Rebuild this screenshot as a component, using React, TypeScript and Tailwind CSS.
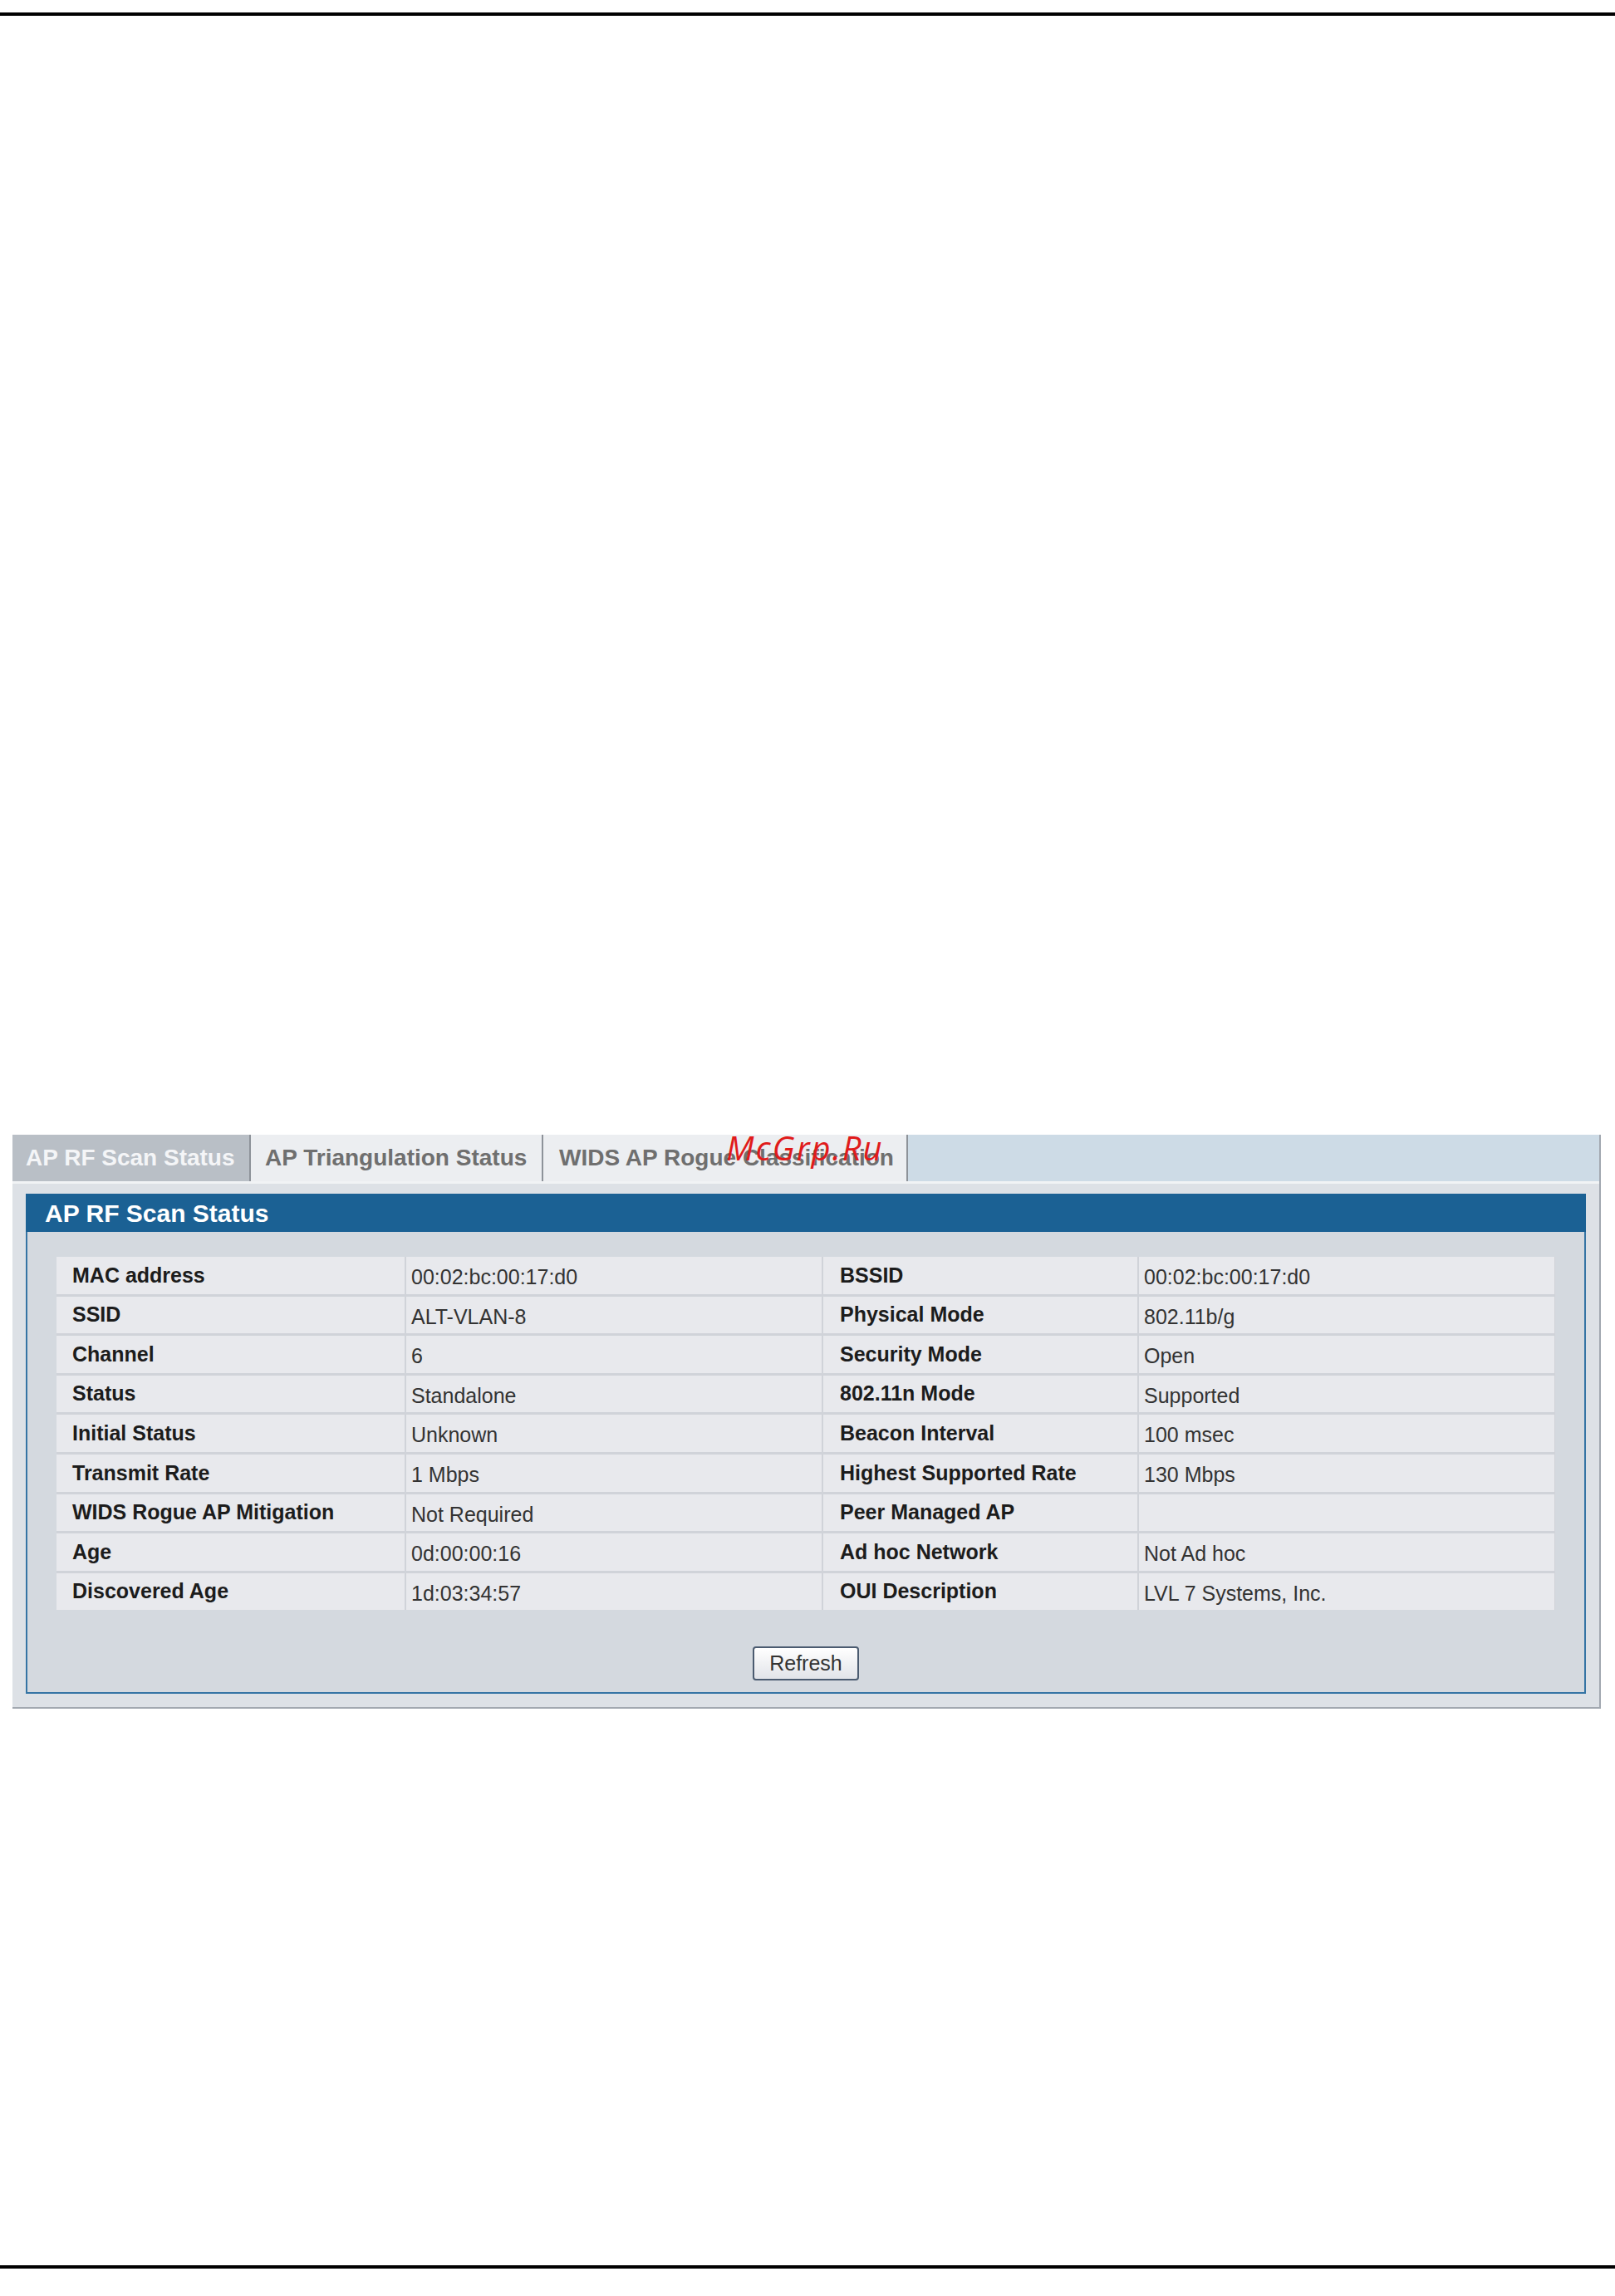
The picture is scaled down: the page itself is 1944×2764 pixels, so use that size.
import React from 'react';

const rows: [string, string, string, string][] = [
  ['MAC address', '00:02:bc:00:17:d0', 'BSSID', '00:02:bc:00:17:d0'],
  ['SSID', 'ALT-VLAN-8', 'Physical Mode', '802.11b/g'],
  ['Channel', '6', 'Security Mode', 'Open'],
  ['Status', 'Standalone', '802.11n Mode', 'Supported'],
  ['Initial Status', 'Unknown', 'Beacon Interval', '100 msec'],
  ['Transmit Rate', '1 Mbps', 'Highest Supported Rate', '130 Mbps'],
  ['WIDS Rogue AP Mitigation', 'Not Required', 'Peer Managed AP', ''],
  ['Age', '0d:00:00:16', 'Ad hoc Network', 'Not Ad hoc'],
  ['Discovered Age', '1d:03:34:57', 'OUI Description', 'LVL 7 Systems, Inc.'],
];

function Label({ text, pl }: { text: string; pl: string }) {
  return (
    <div className={`flex items-center whitespace-nowrap bg-[#e8e9ed] text-[25px] font-bold text-[#1c1c1c] ${pl}`}>
      {text}
    </div>
  );
}

function Value({ text }: { text: string }) {
  return (
    <div className="flex items-center whitespace-nowrap bg-[#e8e9ed] pl-[6px] pt-[5px] text-[25px] text-[#333333]">
      {text}
    </div>
  );
}

export default function App() {
  return (
    <div className="relative h-[2764px] w-[1944px] overflow-hidden bg-white font-['Liberation_Sans',Arial,sans-serif]">
      {/* top rule */}
      <div className="mt-[15px] h-[4px] bg-black" />

      {/* panel */}
      <div className="ml-[15px] mt-[1347px] w-[1912px] border-r-2 border-b-2 border-[#a2a8b0] bg-[#dde1e6]">
        {/* tabs */}
        <div className="flex h-[56px] bg-[#cddbe6] leading-none whitespace-nowrap">
          <div className="flex w-[285px] items-center pl-[16px] bg-[#b9bfc6] text-[28px] font-bold text-[#f4f5f7]">
            AP RF Scan Status
          </div>
          <div className="flex w-[352px] items-center border-l-2 border-[#8d9299] bg-[#eceef1] pl-[17px] text-[28px] font-bold text-[#6f6f6f]">
            AP Triangulation Status
          </div>
          <div className="flex w-[441px] items-center border-x-2 border-[#8d9299] bg-[#eceef1] pl-[19px] text-[28px] font-bold text-[#6f6f6f]">
            WIDS AP Rogue Classification
          </div>
        </div>
        <div className="h-[3px] bg-[#f1f3f5]" />

        <div className="ml-[16px] mr-[16px] mt-[12px] mb-[16px]">
          <div className="flex h-[46px] items-center bg-[#1b6194] pl-[23px] text-[30px] font-bold text-white">
            AP RF Scan Status
          </div>
          <div className="border-x-2 border-b-2 border-[#3574a4] bg-[#d4d9df] px-[35px] pt-[30px] pb-[14px]">
            <div className="grid grid-cols-[419px_500px_378px_500px] auto-rows-[44.6px] gap-x-[2px] gap-y-[3px] bg-[#d0d3d9]">
              {rows.map((r) => (
                <React.Fragment key={r[0]}>
                  <Label text={r[0]} pl="pl-[19px]" />
                  <Value text={r[1]} />
                  <Label text={r[2]} pl="pl-[20px]" />
                  <Value text={r[3]} />
                </React.Fragment>
              ))}
            </div>
            <div className="mt-[44px] flex justify-center">
              <button className="h-[41px] w-[128px] rounded-[4px] border-2 border-[#4b5b70] bg-gradient-to-b from-white to-[#e2e4e9] text-[25px] text-[#333333]">
                Refresh
              </button>
            </div>
          </div>
        </div>
      </div>

      {/* watermark */}
      <div className="absolute left-[874px] top-[1362px] font-['Open_Sans',sans-serif] text-[40px] italic leading-none tracking-[2px] text-[#e01b1b]">
        McGrp.Ru
      </div>

      {/* bottom rule */}
      <div className="mt-[670px] h-[4px] bg-black" />
    </div>
  );
}
